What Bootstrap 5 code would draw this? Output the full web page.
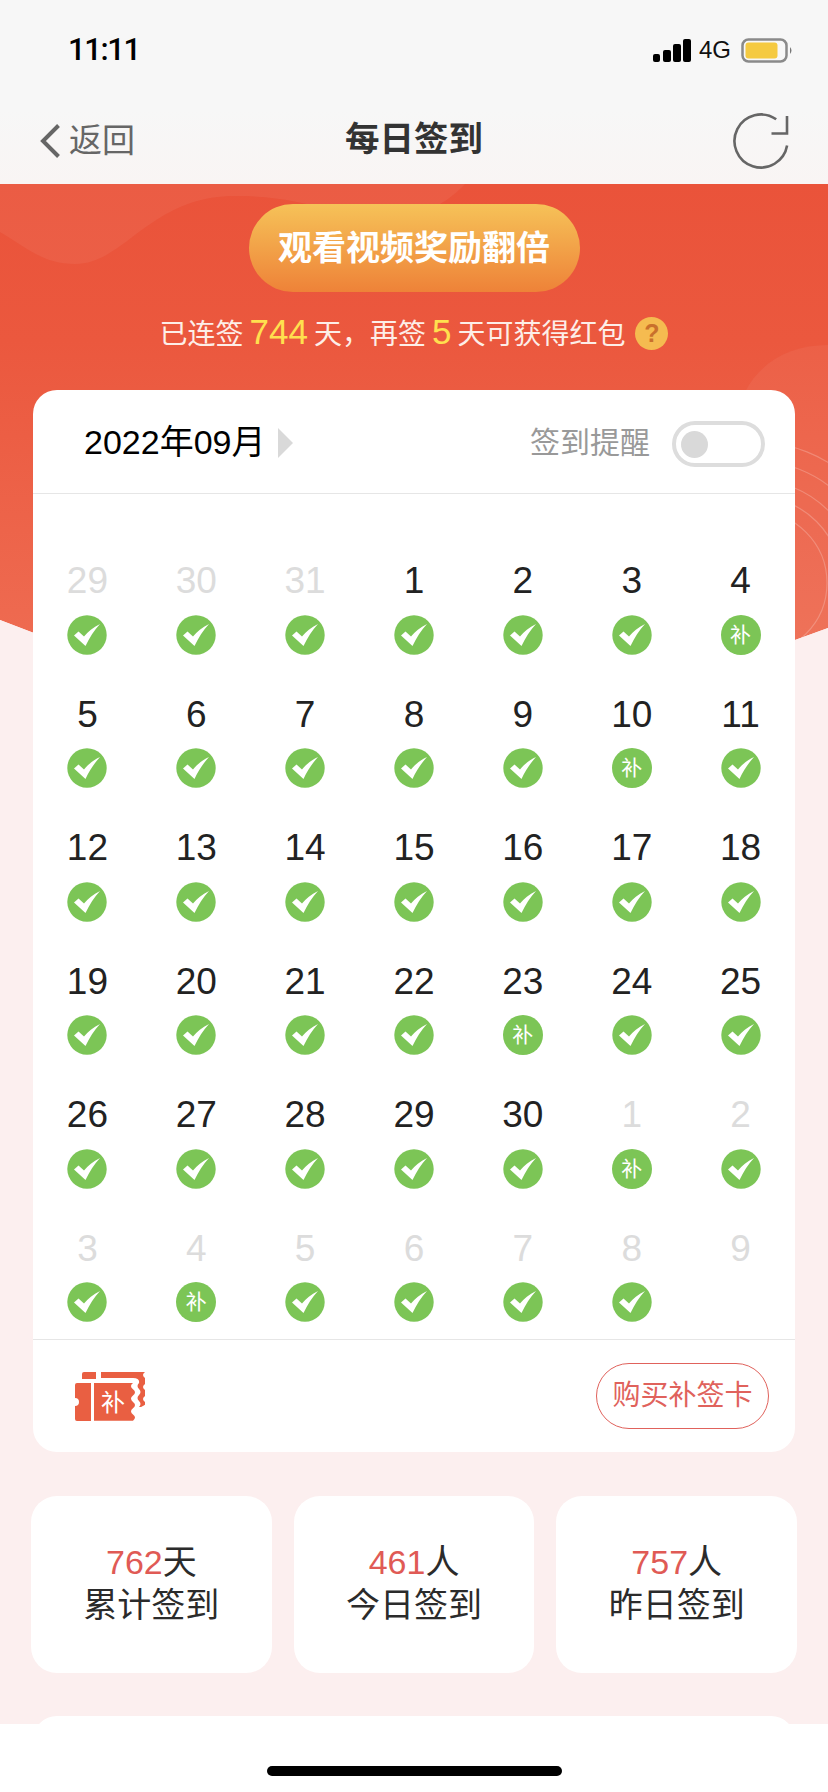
<!DOCTYPE html>
<html lang="zh">
<head>
  <meta charset="UTF-8" />
  <meta name="viewport" content="width=device-width, initial-scale=1.0"/>
  <title>每日签到</title>
  <link href="https://cdn.jsdelivr.net/npm/bootstrap@5.3.3/dist/css/bootstrap.min.css" rel="stylesheet">
  <style>
    body {
      width: 828px;
      height: 1792px;
      overflow: hidden;
      background: #fcefef;
      font-family: "Liberation Sans", "Noto Sans CJK SC", sans-serif;
      color: #222;
    }
    .page-wrap { position: relative; height: 1792px; overflow: hidden; }
    .banner-bg { position: absolute; top: 0; left: 0; }
    .page-top {
      height: 184px;
      background: linear-gradient(#f7f7f7 60%, #f9f5f4);
    }
    .status-bar { height: 88px; padding: 12px 34px 0 68px; }
    .status-time { font-family: Roboto, sans-serif; font-weight: 500; font-size: 31px; letter-spacing: -1.4px; color: #000; }
    .status-net { font-size: 24px; color: #111; margin: 0 10px 0 8px; }
    .nav-line { height: 96px; padding: 10px 38px 0 40px; position: relative; }
    .nav-back { font-size: 33px; color: #666; gap: 9px; }
    .nav-title { font-size: 34.5px; font-weight: 700; color: #333; position: absolute; left: 0; right: 0; top: 26px; text-align: center; line-height: 50px; }
    .content-layer { position: relative; }
    .btn-video {
      display: block;
      width: 331px;
      height: 88px;
      margin: 20px auto 0;
      border: 0;
      background: linear-gradient(#f6c258, #ee8238);
      color: #fff;
      font-size: 34px;
      font-weight: 700;
      line-height: 88px;
      padding: 0;
    }
    .sign-tip { height: 40px; margin-top: 21px; font-size: 28px; line-height: 40px; color: #fdeee8; }
    .sign-tip b { font-weight: 400; font-size: 35px; color: #ffe04f; margin: 0 6px; }
    .tip-q {
      width: 33px; height: 33px; margin-left: 10px;
      background: #f5bb50; color: #c9702c;
      font-size: 25px; font-weight: 700; line-height: 33px;
    }
    .cal-card { margin: 37px 33px 0; background: #fff; border-radius: 24px; }
    .cal-head { height: 104px; padding: 2px 30px 0 51px; border-bottom: 1px solid #e6e6e6; }
    .cal-month { font-size: 34px; color: #000; }
    .cal-arrow { width: 0; height: 0; margin-left: 13px; border-left: 15px solid #d9d9d9; border-top: 15px solid transparent; border-bottom: 15px solid transparent; }
    .remind-label { font-size: 30px; color: #999; margin-right: 22px; }
    .remind-toggle { width: 93px; height: 46px; margin-top: 3px; border: 4px solid #ddd; border-radius: 23px; padding-left: 5px; }
    .remind-knob { width: 27px; height: 27px; background: #d9d9d9; border-radius: 50%; }
    .cal-grid { grid-template-columns: repeat(7, 1fr); row-gap: 39px; padding: 66px 0 17px; }
    .cal-num { font-size: 37px; line-height: 42px; color: #222; }
    .cal-num.other { color: #dcdcdc; }
    .cal-mark { width: 40px; height: 40px; margin: 12.5px auto 0; }
    .cal-mark-bu { background: #7cc556; color: #fff; font-size: 21px; line-height: 40px; border-radius: 50%; }
    .cal-foot { height: 113px; border-top: 1px solid #e6e6e6; padding: 0 26px 0 42px; }
    .btn-buy {
      width: 173px; height: 66px; padding: 0;
      border: 1px solid #e0625c;
      background: #fff;
      color: #e0625c;
      font-size: 28px;
      line-height: 64px;
    }
    .stat-row { margin: 44px 31px 0; gap: 22px; }
    .stat-box { flex: 1 1 0; height: 177px; background: #fff; border-radius: 26px; font-size: 34px; line-height: 43px; color: #2b2b2b; padding-top: 45px; }
    .stat-box em { font-style: normal; font-size: 34px; color: #e05a55; }
    .next-card { height: 60px; margin: 43px 33px 0; background: #fff; border-radius: 24px; }
    .home-area { position: absolute; left: 0; right: 0; bottom: 0; height: 68px; background: #fff; }
    .home-bar { width: 295px; height: 10px; margin-top: 42px; background: #000; border-radius: 5px; }
  </style>
</head>
<body>
  <div class="page-wrap">

    <!-- arka plan -->
    <svg class="banner-bg" width="828" height="700" viewBox="0 0 828 700">
      <defs>
        <linearGradient id="redGrad" x1="0" y1="0" x2="0" y2="1">
          <stop offset="0" stop-color="#ea533a"/>
          <stop offset="0.3" stop-color="#eb583e"/>
          <stop offset="1" stop-color="#ef6f55"/>
        </linearGradient>
      </defs>
      <path d="M0 184H828V628Q414 785 0 620Z" fill="url(#redGrad)"/>
      <path d="M0 184V232C30 250 45 264 75 264C125 264 150 196 235 196C320 196 345 225 400 218C430 213 450 200 465 184Z" fill="#fff" fill-opacity=".055"/>
      <path d="M745 392C760 362 790 345 828 345V640H745Z" fill="#fff" fill-opacity=".05"/>
      <g fill="none" stroke="#fff" stroke-opacity=".22" stroke-width="1.2">
        <circle cx="755" cy="583" r="141"/>
        <circle cx="755" cy="583" r="122"/>
        <circle cx="755" cy="583" r="103"/>
        <circle cx="755" cy="583" r="87"/>
        <circle cx="755" cy="583" r="72"/>
      </g>
      <path d="M828 628Q414 785 0 620V700H828Z" fill="#fcefef"/>
    </svg>

    <div class="content-layer">
      <!-- ust bar -->
      <div class="page-top">
        <div class="status-bar d-flex align-items-center">
          <span class="status-time">11:11</span>
          <span class="ms-auto d-flex align-items-center">
            <svg width="38" height="23" viewBox="0 0 38 23" fill="#000">
              <rect x="0" y="15" width="7" height="8" rx="2"/>
              <rect x="10" y="11" width="8" height="12" rx="2"/>
              <rect x="20" y="5" width="8" height="18" rx="2"/>
              <rect x="30" y="0" width="8" height="23" rx="2"/>
            </svg>
            <span class="status-net">4G</span>
            <svg width="53" height="25" viewBox="0 0 53 25">
              <rect x="1.5" y="1.5" width="44" height="22" rx="6" fill="none" stroke="#8a8a8a" stroke-width="2.5"/>
              <rect x="4.5" y="4.5" width="32" height="16" rx="3" fill="#f5ca41"/>
              <path d="M49 9Q52 12.5 49 16Z" fill="#777"/>
            </svg>
          </span>
        </div>
        <div class="nav-line d-flex align-items-center justify-content-between">
          <div class="nav-back d-flex align-items-center">
            <svg width="20" height="34" viewBox="0 0 20 34" fill="none" stroke="#666" stroke-width="4">
              <path d="M18.500 1.500L3 17L18.500 32.500"/>
            </svg>
            <span>返回</span>
          </div>
          <div class="nav-title">每日签到</div>
          <svg width="57" height="57" viewBox="0 0 57 57" fill="none" stroke="#666" stroke-width="2.600">
            <path d="M54.100 32.600A26.500 26.500 0 1 1 43.200 6.300"/>
            <path d="M38.500 20.500H54V3"/>
          </svg>
        </div>
      </div>

      <button type="button" class="btn btn-video rounded-pill">观看视频奖励翻倍</button>

      <div class="sign-tip d-flex align-items-center justify-content-center">
        <span>已连签<b>744</b>天，再签<b>5</b>天可获得红包</span>
        <span class="tip-q rounded-circle text-center">?</span>
      </div>

      <!-- takvim -->
      <div class="cal-card">
        <div class="cal-head d-flex align-items-center">
          <span class="cal-month">2022年09月</span>
          <span class="cal-arrow"></span>
          <span class="remind-label ms-auto">签到提醒</span>
          <span class="remind-toggle d-flex align-items-center"><span class="remind-knob"></span></span>
        </div>
        <div class="cal-grid d-grid text-center" id="calGrid"></div>
        <div class="cal-foot d-flex align-items-center justify-content-between">
          <svg width="70" height="49" viewBox="0 0 70 49">
            <g fill="#e95f42">
              <path d="M9 0H21V7H7V2Q7 0 9 0Z"/>
              <path d="M26 0H70q-4 3 0 6q4 3 0 6q-4 3 0 6q4 3 0 6q-4 3 0 6q3 2 -4 5h-2q3-3 0-6q-3-3 0-6q3-3 0-6q-3-3 0-6q1-5 -6-5H26Z"/>
              <path d="M2 11H16V49H2Q0 49 0 47V34a4 4 0 0 0 0-8V13Q0 11 2 11Z"/>
              <path d="M19 11H58q-4 3 0 6.300q4 3 0 6.300q-4 3 0 6.300q4 3 0 6.300q-4 3 0 6.300q4 3 0 6.200H19Z"/>
            </g>
            <text x="38" y="39" text-anchor="middle" fill="#fff" font-size="24" font-family="Noto Sans CJK SC, sans-serif">补</text>
          </svg>
          <button type="button" class="btn btn-buy rounded-pill">购买补签卡</button>
        </div>
      </div>

      <!-- istatistik -->
      <div class="stat-row d-flex">
        <div class="stat-box text-center"><em>762</em>天<br>累计签到</div>
        <div class="stat-box text-center"><em>461</em>人<br>今日签到</div>
        <div class="stat-box text-center"><em>757</em>人<br>昨日签到</div>
      </div>

      <div class="next-card"></div>
    </div>

    <div class="home-area d-flex justify-content-center">
      <div class="home-bar"></div>
    </div>
  </div>

  <script src="https://cdn.jsdelivr.net/npm/bootstrap@5.3.3/dist/js/bootstrap.bundle.min.js"></script>
  <script>
    // num, diger ay mi, isaret: c = tik, b = 补, "" = yok
    const gunler = [
      [29,1,"c"],[30,1,"c"],[31,1,"c"],[1,0,"c"],[2,0,"c"],[3,0,"c"],[4,0,"b"],
      [5,0,"c"],[6,0,"c"],[7,0,"c"],[8,0,"c"],[9,0,"c"],[10,0,"b"],[11,0,"c"],
      [12,0,"c"],[13,0,"c"],[14,0,"c"],[15,0,"c"],[16,0,"c"],[17,0,"c"],[18,0,"c"],
      [19,0,"c"],[20,0,"c"],[21,0,"c"],[22,0,"c"],[23,0,"b"],[24,0,"c"],[25,0,"c"],
      [26,0,"c"],[27,0,"c"],[28,0,"c"],[29,0,"c"],[30,0,"c"],[1,1,"b"],[2,1,"c"],
      [3,1,"c"],[4,1,"b"],[5,1,"c"],[6,1,"c"],[7,1,"c"],[8,1,"c"],[9,1,""]
    ];
    const tik = '<svg width="40" height="40" viewBox="0 0 40 40"><circle cx="20" cy="20" r="19.700" fill="#7cc556"/>' +
      '<path d="M7 20.500L11.500 16.500L17 21.500C21 16.500 26 12.500 33 9C27 15.500 22.500 22.500 18.500 31Z" fill="#fff"/></svg>';
    document.getElementById("calGrid").innerHTML = gunler.map(g => {
      let isaret = "";
      if (g[2] === "c") isaret = `<div class="cal-mark">${tik}</div>`;
      if (g[2] === "b") isaret = `<div class="cal-mark cal-mark-bu">补</div>`;
      if (g[2] === "") isaret = `<div class="cal-mark"></div>`;
      return `<div><div class="cal-num${g[1] ? " other" : ""}">${g[0]}</div>${isaret}</div>`;
    }).join("");
  </script>
</body>
</html>
